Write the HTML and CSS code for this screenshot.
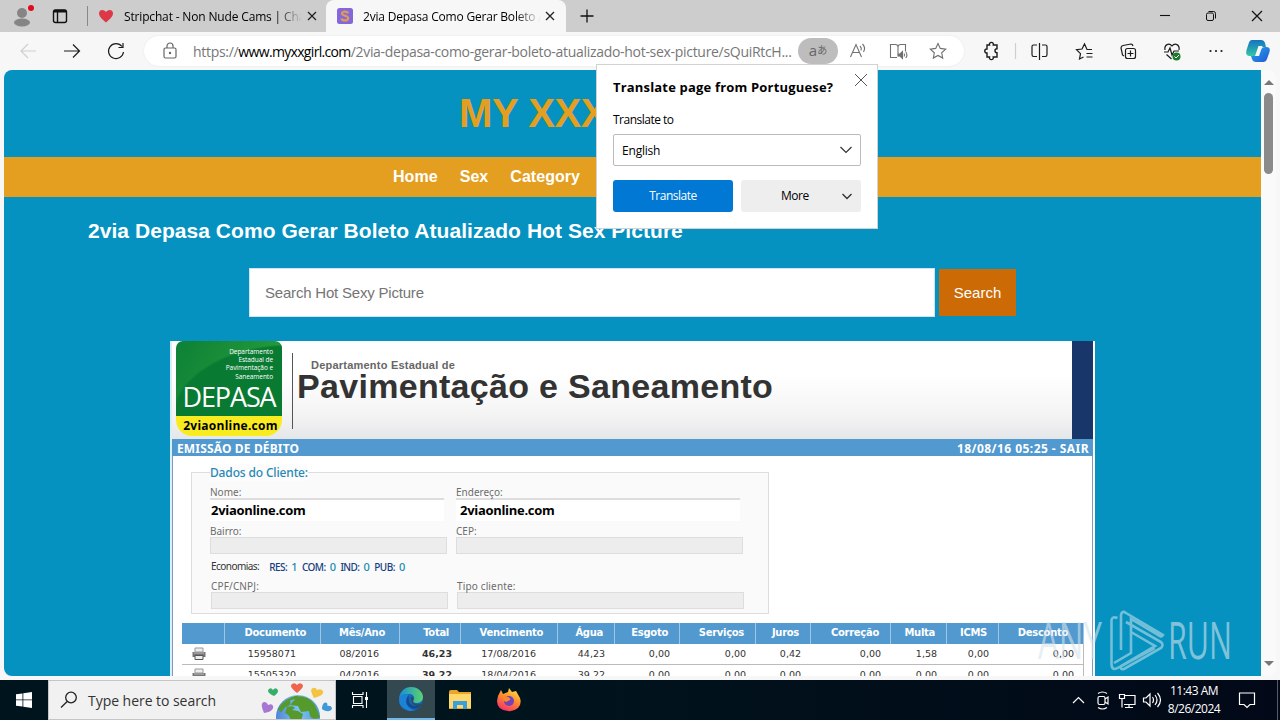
FILE: index.html
```html
<!DOCTYPE html>
<html lang="en">
<head>
<meta charset="utf-8">
<title>2via Depasa Como Gerar Boleto</title>
<link rel="stylesheet" href="styles.css">
</head>
<body>
<div class="screen">
  <header class="tabstrip">
    <svg class="profile" width="80" height="32" viewBox="0 0 80 32"><circle cx="22" cy="13" r="5" fill="#858585"/><ellipse cx="22" cy="22.5" rx="8" ry="4" fill="#858585"/><circle cx="31" cy="8" r="3" fill="#e00b1c"/><g fill="none" stroke="#111" stroke-width="1.4"><rect x="53.5" y="10" width="13" height="12.5" rx="2"/><path d="M54 11.2h12" stroke-width="2.6"/><path d="M57.5 12v10"/></g></svg>
    <i class="tabsep"></i>
    <div class="tab">
      <svg width="16" height="16" viewBox="0 0 16 16"><path d="M8 14.5C4 11 1 8.500 1 5.200 1 1.500 5.800 .600 8 4c2.200-3.400 7-2.500 7 1.200 0 3.300-3 5.800-7 9.300z" fill="#dc3848"/></svg>
      <span class="tabtitle t1">Stripchat - Non Nude Cams | Chat</span>
      <svg class="x" width="10" height="10" viewBox="0 0 10 10"><path d="M1 1l8 8M9 1L1 9" stroke="#222" stroke-width="1.3"/></svg>
    </div>
    <div class="tab active">
      <svg width="16" height="16" viewBox="0 0 16 16"><rect width="16" height="16" rx="2.500" fill="#8467dd"/><path d="M11 5.300C10.300 3.300 5 2.900 5 5.600c0 2.600 6.100 1.600 6.100 4.600 0 3-6 2.800-6.600.2" fill="none" stroke="#dc9c54" stroke-width="2.300"/></svg>
      <span class="tabtitle t2">2via Depasa Como Gerar Boleto Atualizado</span>
      <svg class="x" width="10" height="10" viewBox="0 0 10 10"><path d="M1 1l8 8M9 1L1 9" stroke="#222" stroke-width="1.3"/></svg>
    </div>
    <svg class="plus" width="16" height="16" viewBox="0 0 16 16"><path d="M8 1.500v13M1.500 8h13" stroke="#111" stroke-width="1.300"/></svg>
    <svg class="winctl" width="104" height="14" viewBox="0 0 104 14" fill="none" stroke="#111"><path d="M0 6.500h10" stroke-width="1.100"/><rect x="46.500" y="4" width="7" height="7.500" rx="1.500"/><path d="M48.500 2.500h5a2 2 0 0 1 2 2v5"/><path d="M92 2l10 10M102 2L92 12" stroke-width="1.200"/></svg>
  </header>

  <div class="toolbar">
    <svg class="navicons" width="124" height="20" viewBox="0 0 124 20" fill="none" stroke="#1c1c1c" stroke-width="1.200"><path d="M16 10H1M8 3l-7 7 7 7" stroke="#cfcfcf"/><path d="M44 10h15.500M53 3.500l6.500 6.500-6.500 6.500"/><path d="M102 5.500A7.500 7.500 0 1 0 103.500 11M103 2v4.500h-4.500"/></svg>
    <div class="omnibox">
      <svg width="14" height="18" viewBox="0 0 14 18" fill="none" stroke="#666" stroke-width="1.200"><rect x="1" y="6" width="12" height="10" rx="1.500"/><path d="M4 6V4a3 3 0 0 1 6 0v2"/><circle cx="7" cy="11" r=".6" fill="#666"/></svg>
      <span class="url"><span>https://</span><b>www.myxxgirl.com</b><span class="path">/2via-depasa-como-gerar-boleto-atualizado-hot-sex-picture/sQuiRtcH...</span></span>
      <span class="pill">a<small>あ</small></span>
      <svg class="omniicons" width="104" height="22" viewBox="0 0 104 22" fill="none" stroke="#707070" stroke-width="1.100"><path d="M3.500 17L9 4.500 14.500 17M5.500 12.500h7M13 6q2 2 1 4.500M15.500 4q3.500 3.500 1 8"/><path d="M50 17.500h-6.500v-13h5q2 0 2.500 2v10M51 6.500q.5-2 2.500-2h5v7"/><path d="M51.500 14h1.500l2.500-2.500v7L53 16h-1.500z" fill="#707070"/><path d="M57 13.500q1.200 1.500 0 3M58.800 12q2.200 3 0 6"/><path d="M91 3.500l2.300 4.900 5.400.7-4 3.700 1 5.300-4.700-2.600-4.700 2.600 1-5.300-4-3.700 5.400-.7z"/></svg>
    </div>
    <svg class="toolicons" width="300" height="30" viewBox="975 36 300 30" fill="none" stroke="#1c1c1c" stroke-width="1.200">
      <path d="M987 45h2.500a2 2 0 1 1 3.800 0H997v3.800a2 2 0 1 0 0 4V57h-3.700a2 2 0 1 1-3.800 0H987v-4h-.5a2 2 0 1 1 .5-4z" stroke-width="1.400"/>
      <path d="M1015.500 43v16" stroke="#cfcfcf"/>
      <path d="M1039.500 43v17M1037 45h-3.500q-1.500 0-1.500 1.500v8q0 2 1.500 2h3.500M1042 45h3.500q1.500 0 1.500 1.500v8q0 2-1.500 2H1042"/>
      <path d="M1092 49.500h-5l-2.500-5.500-2.500 5-5.500.7 4 4-1 5.300 4-2M1086.500 53.500h6M1086.500 57h6"/>
      <path d="M1124 56l-1.500-1-1.500-7q0-2 2-2.500l8-1.500q1.500 0 2 2"/><rect x="1125.500" y="48.500" width="10" height="10" rx="2"/><path d="M1130.500 50.500v6M1127.500 53.500h6"/>
      <path d="M1165 50c-1-5 4-8 7-4 3-4 8-1 7 4M1164 52h4l2-4 2 7 2-4h5M1166.500 54.500l5 4.500"/><circle cx="1176.500" cy="56.500" r="4" fill="#1c7c2e" stroke="none"/><path d="M1174.500 56.500l1.500 1.500 3-3" stroke="#fff" stroke-width="1"/>
      <g fill="#1c1c1c" stroke="none"><circle cx="1210.500" cy="51" r="1.100"/><circle cx="1216" cy="51" r="1.100"/><circle cx="1221.500" cy="51" r="1.100"/></g>
      <defs><linearGradient id="ca" x2="0" y2="1"><stop stop-color="#1572c4"/><stop offset="1" stop-color="#33c7a3"/></linearGradient><linearGradient id="cb" x2="1" y2="1"><stop stop-color="#29a6ee"/><stop offset="1" stop-color="#2356d4"/></linearGradient></defs>
      <path d="M1252 40h9q3 0 4 3l1 4h-4q-3 0-4 3l-2 6h-6q-5 0-3.500-6l2-6q1-4 3.500-4z" fill="url(#ca)" stroke="none"/><path d="M1265 47h1q5 0 3.500 5l-2.500 7q-1 3-4 3h-7q-3 0-4-3l-1-3h4q3 0 4-3l2-4q1-2 4-2z" fill="url(#cb)" stroke="none"/><path d="M1258.500 46h4l-3.500 10h-4z" fill="#f7f7f7" stroke="none"/>
    </svg>
  </div>

  <div class="viewport">
    <main class="site">
      <div class="brand">MY XXX</div>
      <nav><span>Home</span><span>Sex</span><span>Category</span></nav>
      <h1>2via Depasa Como Gerar Boleto Atualizado Hot Sex Picture</h1>
      <div class="search"><div class="field">Search Hot Sexy Picture</div><div class="go">Search</div></div>

      <section class="bill">
        <div class="billhead">
          <div class="logo"><div class="green"><p>Departamento<br>Estadual de<br>Pavimentação e<br>Saneamento</p><strong>DEPASA</strong></div><div class="yellow">2viaonline.com</div></div>
          <div class="dept"><span>Departamento Estadual de</span><b>Pavimentação e Saneamento</b></div>
          <i class="navy"></i>
        </div>
        <div class="strip"><span class="emissao">EMISSÃO DE DÉBITO</span><span class="sair">18/08/16 05:25 - SAIR</span></div>
        <div class="sheet">
          <div class="client">
            <div class="legend"><span>Dados do Cliente:</span></div>
            <div class="pair"><div><label>Nome:</label><div class="white">2viaonline.com</div></div><div><label>Endereço:</label><div class="white second">2viaonline.com</div></div></div>
            <div class="pair mid"><div><label>Bairro:</label><div class="grey"></div></div><div><label>CEP:</label><div class="grey"></div></div></div>
            <div class="econ"><span>Economias:</span><b>RES: <i>1</i></b><b>COM: <i>0</i></b><b>IND: <i>0</i></b><b>PUB: <i>0</i></b></div>
            <div class="pair low"><div><label>CPF/CNPJ:</label><div class="grey"></div></div><div><label>Tipo cliente:</label><div class="grey"></div></div></div>
          </div>
          <div class="table">
            <div class="row head"><span></span><span>Documento</span><span>Mês/Ano</span><span>Total</span><span>Vencimento</span><span>Água</span><span>Esgoto</span><span>Serviços</span><span>Juros</span><span>Correção</span><span>Multa</span><span>ICMS</span><span>Desconto</span></div>
            <div class="row"><span class="pr"><svg width="14" height="14" viewBox="0 0 14 14"><path d="M3 1h8v4H3z" fill="#eee" stroke="#999"/><path d="M.5 5h13v5H.5z" fill="#777"/><path d="M2 6h10M3 11h8" stroke="#bbb"/><path d="M3 8.500h8v4H3z" fill="#eee" stroke="#555"/></svg></span><span>15958071</span><span>08/2016</span><span class="tot">46,23</span><span>17/08/2016</span><span>44,23</span><span>0,00</span><span>0,00</span><span>0,42</span><span>0,00</span><span>1,58</span><span>0,00</span><span>0,00</span></div>
            <div class="row"><span class="pr"><svg width="14" height="14" viewBox="0 0 14 14"><path d="M3 1h8v4H3z" fill="#eee" stroke="#999"/><path d="M.5 5h13v5H.5z" fill="#777"/><path d="M2 6h10M3 11h8" stroke="#bbb"/><path d="M3 8.500h8v4H3z" fill="#eee" stroke="#555"/></svg></span><span>15505320</span><span>04/2016</span><span class="tot">39,22</span><span>18/04/2016</span><span>39,22</span><span>0,00</span><span>0,00</span><span>0,00</span><span>0,00</span><span>0,00</span><span>0,00</span><span>0,00</span></div>
          </div>
        </div>
      </section>
    </main>
    <aside class="scroll"><i class="up"></i><i class="thumb"></i><i class="down"></i></aside>
  </div>

  <footer class="taskbar">
    <div class="start"><svg width="16" height="16" viewBox="0 0 16 16" fill="#fff"><path d="M0 2.300l6.500-.9v6.100H0zM7.300 1.300L16 0v7.500H7.300zM0 8.300h6.500v6.200L0 13.700zM7.300 8.300H16V16l-8.700-1.300z"/></svg></div>
    <div class="tsearch">
      <svg width="18" height="18" viewBox="0 0 18 18" fill="none" stroke="#222" stroke-width="1.300"><circle cx="11" cy="6.500" r="5.300"/><path d="M7.200 10.500L1 16.500"/></svg>
      <span>Type here to search</span>
      <svg class="earth" width="72" height="38" viewBox="260 681 72 38"><defs><linearGradient id="sea"><stop stop-color="#4e86dc"/><stop offset=".5" stop-color="#7cc4f0"/><stop offset="1" stop-color="#4e9be0"/></linearGradient></defs><circle cx="297" cy="717" r="22" fill="url(#sea)"/><path d="M277 709q6-11 20-13.500-2 4-8 5 2 5-5 7l-4 5zM293 696q15-1 21 9l5 12q-7 4-10-1l-1-5-8 1-3-6-8-1 5-6zM286 707q6-2 8 1l-3 2 6 1 5 3-2 7h-10q-1-6-6-8z" fill="#569a2d"/><path d="M296 693c-6-5-7-7-5-9q3-2 5 1 2-3 5-1c2 2 1 4-5 9z" fill="#ee654d"/><path d="M273 696c-6-3-7-5-5-7q2-2 4 1 2-3 4-1c2 2 1 4-3 7z" fill="#35ae6c"/><path d="M313 698c-3-6-4-9-1-10q3-1 4 2 4-2 6 1c1 3-2 5-9 7z" fill="#f4c341"/><path d="M263 713c-3-7-3-10 0-11q3 0 4 3 4-2 5 1c1 3-2 6-9 7z" fill="#a678d4"/><path d="M321 709c0-4 2-8 5-6q1 3 0 3 4-1 5 2c0 3-5 5-10 1z" fill="#3d9ad6"/></svg>
    </div>
    <div class="apps">
      <div class="app"><svg width="18" height="18" viewBox="0 0 18 18" fill="none" stroke="#fff" stroke-width="1.100"><path d="M1.500 1v2.500H12V1M1.500 17v-2.500H12V17M2.500 5.500H11v7H2.500zM15.500 1v16"/><path d="M14 6h3v3h-3z" fill="#fff" stroke="none"/></svg></div>
      <div class="app current"><svg width="24" height="24" viewBox="0 0 24 24"><defs><linearGradient id="ed" x2="1"><stop stop-color="#198ed4"/><stop offset="1" stop-color="#5ad36f"/></linearGradient></defs><circle cx="12" cy="12" r="12" fill="#1564b8"/><path d="M0 12C1 4 6 0 12 0c7 0 12 5 12 10 0 4-3 6-7 6-4-.5-3-2-2-4 1-3-2-5-5-5-5 0-9 2-10 5z" fill="url(#ed)"/><path d="M0 13q0-6 7-6 3 0 4 2-5 3-2 9 2 5 7 5-3 1-6 1Q0 21 0 13z" fill="#1b83d5"/><path d="M10 8c-4 3-4 11 2 13 4 2 8 0 10-3-7 3-14 0-12-10z" fill="#114a91"/><path d="M12 10q3 0 2.500 3-1.500 2 1 3.500 4 2 9-.5-2 3-6 3-7-1-6.500-9z" fill="#34484f"/></svg></div>
      <div class="app"><svg width="22" height="20" viewBox="0 0 22 20"><path d="M0 2q0-2 2-2h6l2 2h12v17H0z" fill="#e9a52c"/><path d="M0 4h22v14H0z" fill="#ffd76a"/><path d="M4 11h14v8h-4v-4H8v4H4z" fill="#3aa0dc"/></svg></div>
      <div class="app"><svg width="24" height="24" viewBox="0 0 24 24"><defs><linearGradient id="ff" x1=".8" x2=".3" y2="1"><stop stop-color="#ffe63e"/><stop offset=".5" stop-color="#ff8730"/><stop offset="1" stop-color="#f5306b"/></linearGradient></defs><path d="M1 8l3-6 2 4 5-2 1-4 3 4 4-1 4 7q2 6-2 10-5 4-10 3Q0 22 0 13z" fill="url(#ff)"/><circle cx="12" cy="13" r="5" fill="#7142bc"/><path d="M5 8l6 1q3 1 2 3l-4 2q-3-1-4-6z" fill="#ff8a25"/></svg></div>
    </div>
    <svg class="tray" width="90" height="24" viewBox="0 0 90 24" fill="none" stroke="#fff" stroke-width="1.200"><path d="M1 15l5.500-5.500L12 15"/><rect x="26" y="8.500" width="7" height="8" rx="1.500"/><path d="M33 11l3-2v7l-3-2M26 5.500q4.500-3 9 0M26 19.500q4.500 3 9 0"/><path d="M52 7.500h11v9h-11M57 16.500v3M53 19.500h8M47.500 6.500h5v4h-5zM50 10.500v9"/><path d="M71.500 10v4h2.500l4 4V6l-4 4zM80.500 9q2 3 0 6M83 7q4 5 0 10M85.500 5q6 7 0 14"/></svg>
    <div class="clock"><span>11:43 AM</span><span>8/26/2024</span></div>
    <svg class="notice" width="18" height="18" viewBox="0 0 18 18" fill="none" stroke="#fff" stroke-width="1.200"><path d="M1.500 2h15v11.500H12L9 16.500l-3-3H1.500z"/></svg>
    <i class="desk"></i>
  </footer>

  <div class="popup">
    <div class="ptop"><b>Translate page from Portuguese?</b><svg width="14" height="14" viewBox="0 0 14 14"><path d="M1 1l12 12M13 1L1 13" stroke="#555"/></svg></div>
    <div class="to">Translate to</div>
    <div class="select"><span>English</span><svg width="12" height="8" viewBox="0 0 12 8"><path d="M.5 1L6 6.500 11.500 1" fill="none" stroke="#333" stroke-width="1.200"/></svg></div>
    <div class="buttons"><div class="blue">Translate</div><div class="more"><span>More</span><svg width="10" height="7" viewBox="0 0 10 7"><path d="M.5 1L5 5.500 9.500 1" fill="none" stroke="#333" stroke-width="1.400"/></svg></div></div>
  </div>

  <svg class="watermark" width="200" height="70" viewBox="1034 606 200 70">
    <text x="1038" y="659" textLength="64" lengthAdjust="spacingAndGlyphs">ANY</text><text x="1168" y="659" textLength="64" lengthAdjust="spacingAndGlyphs">RUN</text>
    <path d="M1117.500 618q-5-2-6 2v44q0 8 8 3l35-19M1121 650v-35q1-5 5-2l37 22q-1 2-3 1l-29-17v27M1126 622l35 20q3 3 0 6l-37 21q-4 1-3-3l34-20-24-14M1131 625v28l-17 10"/>
  </svg>
</div>
</body>
</html>
```
FILE: styles.css
```css
* { box-sizing: border-box; }
body { margin: 0; background: #f7f7f7; font-family: "Open Sans", "Noto Sans CJK JP", sans-serif; }
svg { display: block; flex: none; }
.screen { position: relative; width: 1280px; height: 720px; overflow: hidden; display: flex; flex-direction: column; }

.tabstrip { height: 32px; background: #cdcdcd; display: flex; align-items: center; flex: none; }
.tabsep { width: 1px; height: 20px; background: #888; margin: 0 10px 0 7px; }
.tab { display: flex; align-items: center; height: 32px; width: 228px; font-size: 12px; white-space: nowrap; }
.tab .tabtitle { width: 178px; margin-left: 10px; overflow: hidden; letter-spacing: -.2px; -webkit-mask-image: linear-gradient(90deg, #000 152px, transparent 178px); }
.tab .t1 { letter-spacing: -.16px; }
.tab .x { margin-left: 5px; }
.tab.active { background: #f7f7f7; width: 240px; padding-left: 11px; border-radius: 8px 8px 0 0; }
.tab.active .x { margin-left: 4px; }
.plus { margin-left: 13px; }
.winctl { margin-left: auto; margin-right: 16px; }

.toolbar { height: 38px; display: flex; align-items: center; flex: none; }
.navicons { margin-left: 20px; }
.omnibox { height: 30px; width: 820px; background: #fff; border-radius: 15px; display: flex; align-items: center; padding-left: 19px; box-shadow: 0 0 2px #e4e4e4; }
.url { width: 600px; margin-left: 16px; font-size: 14px; color: #777; white-space: nowrap; display: flex; letter-spacing: -.3px; }
.url b { font-weight: 400; color: #000; letter-spacing: -.67px; }
.pill { width: 40px; height: 26px; border-radius: 13px; background: #bdbdbd; color: #666; display: flex; align-items: center; justify-content: center; font-size: 15px; line-height: 20px; padding-bottom: 3px; margin-left: 5px; }
.pill small { font-size: 10px; }
.omniicons { margin-left: 9px; }
.toolicons { margin-left: 11px; }

.viewport { height: 606px; margin: 0 4px; display: flex; border-radius: 8px; overflow: hidden; background: #fafafa; flex: none; }
.site { width: 1257px; background: #0592c1; font-family: "Liberation Sans", Arial, sans-serif; overflow: hidden; }
.brand { height: 87px; padding-left: 455px; line-height: 86px; font-size: 40px; font-weight: 700; color: #e59f20; white-space: nowrap; letter-spacing: -.4px; }
nav { height: 40px; background: #e59f20; display: flex; gap: 22px; padding-left: 389px; color: #fff; font-weight: 700; font-size: 16px; line-height: 39px; letter-spacing: .05px; }
h1 { margin: 0; padding-left: 84px; height: 71px; line-height: 68px; color: #fff; font-size: 21px; letter-spacing: .05px; white-space: nowrap; }
.search { display: flex; gap: 4px; align-items: center; padding-left: 245px; height: 49px; font-size: 15px; }
.field { width: 686px; height: 49px; border: 1px solid #cfe4ec; background: #fff; color: #757575; line-height: 47px; padding-left: 15px; letter-spacing: -.2px; }
.go { width: 77px; height: 47px; background: #cc6a05; color: #fff; line-height: 47px; text-align: center; font-size: 15px; }

.bill { margin: 24px 0 0 166px; width: 925px; height: 340px; background: #fff; border-left: 2px solid #d9eef7; border-right: 2px solid #fff; }
.billhead { height: 98px; display: flex; background: linear-gradient(#fff 35%, #f4f4f4 75%, #e5e6e8); }
.logo { width: 106px; margin-left: 4px; height: 95px; border-radius: 7px 7px 16px 16px; overflow: hidden; flex: none; }
.green { height: 75px; background: radial-gradient(ellipse 120px 75px at 115px 78px, #087a31 0 97%, transparent 100%), linear-gradient(120deg, #0d8136, #2ea23b); color: #fff; padding-top: 7px; }
.green p { margin: 0; text-align: right; padding-right: 9px; font: 6.500px/8.200px "Open Sans", sans-serif; letter-spacing: -.05px; }
.green strong { display: block; font: 400 27px/28px "Open Sans", sans-serif; text-align: center; letter-spacing: -1.100px; padding-top: 2px; }
.yellow { height: 20px; background: #f8ec20; color: #000; font: 700 12px/20px "Open Sans", sans-serif; text-align: center; letter-spacing: .25px; white-space: nowrap; padding-left: 3px; }
.dept { margin: 12px 0 0 10px; height: 76px; border-left: 1px solid #555; padding: 5px 0 0 4px; display: flex; flex-direction: column; white-space: nowrap; color: #333; }
.dept span { font-size: 11px; line-height: 15px; padding-left: 14px; font-weight: 700; color: #666; letter-spacing: .22px; }
.dept b { font-size: 34px; line-height: 27px; letter-spacing: .3px; }
.navy { width: 21px; margin-left: auto; background: #19366a; }
.strip { height: 17px; background: #5199cf; color: #fff; display: flex; justify-content: space-between; padding: 0 4px 0 5px; font: 700 12px/19px "Noto Sans", sans-serif; letter-spacing: .15px; }
.sair { letter-spacing: .45px; }
.sheet { border-left: 1px solid #7f9abc; border-right: 1px solid #7f9abc; padding: 16px 0 0 9px; height: 230px; }
.client { width: 578px; height: 142px; margin-left: 9px; border: 1px solid #ddd; background: #fafafa; padding-left: 18px; color: #6c6c6c; font: 10px/12px "Noto Sans", sans-serif; }
.legend { height: 13px; margin-top: -6px; color: #2788b5; font-size: 12px; line-height: 12px; font-weight: 500; letter-spacing: -.15px; }
.legend span { background: #fcfcfc; }
.pair { display: flex; gap: 9px; height: 39px; padding-top: 5px; }
.pair > div:first-child { width: 237px; }
.pair > div:last-child { width: 287px; }
.pair label { display: block; height: 13px; line-height: 14px; }
.white { height: 23px; margin-right: 3px; background: #fff; border-top: 2px solid #ddd; color: #000; font: 700 13px/20px "Open Sans", sans-serif; letter-spacing: -.3px; padding-left: 1px; }
.second { padding-left: 4px; line-height: 21px; }
.grey { height: 17px; background: #ededed; border: 1px solid #ddd; }
.econ { display: flex; height: 15px; margin-top: 1px; line-height: 15px; gap: 5px; color: #333; letter-spacing: -.55px; padding-left: 1px; }
.econ span { margin-right: 5px; }
.econ b { font-weight: 500; color: #124082; }
.econ i { font-style: normal; color: #188ab0; font-size: 11px; margin-left: 2px; }
.low { padding-top: 5px; margin-left: 1px; }
.low label { letter-spacing: .15px; }
.table { width: 902px; margin-top: 9px; }
.row { display: grid; grid-template-columns: 43px 96px 79px 61px 97px 57px 65px 76px 55px 80px 56px 52px 85px; height: 21px; border-bottom: 1px solid #bbb; border-right: 1px solid #bbb; font: 9.500px/19px "DejaVu Sans", Verdana, sans-serif; color: #333; text-align: right; }
.row span { padding-right: 10px; white-space: nowrap; }
.row span:nth-child(2) { padding-right: 25px; }
.row span:nth-child(3) { padding-right: 21px; }
.row span:nth-child(5) { padding-right: 22px; }
.row.head { background: #5199cf; color: #fff; font-weight: 700; font-size: 10px; border: 0; line-height: 20px; letter-spacing: -.3px; }
.row.head span { border-right: 1px solid #9fc6e5; padding-right: 11px; }
.row.head span:nth-child(2), .row.head span:nth-child(3), .row.head span:nth-child(5) { padding-right: 14px; }
.row.head span:last-child { padding-right: 15px; }
.row .tot { font-weight: 700; padding-right: 9px; }
.pr svg { margin: 3px 0 0 10px; }

.scroll { width: 15px; display: flex; flex-direction: column; align-items: center; }
.up { border: 5px solid transparent; border-top: 0; border-bottom: 5px solid #777; margin-top: 10px; }
.thumb { width: 9px; height: 81px; border-radius: 5px; background: #8a8a8a; margin-top: 8px; }
.down { border: 5px solid transparent; border-bottom: 0; border-top: 5px solid #777; margin-top: auto; margin-bottom: 10px; }

.taskbar { height: 40px; margin-top: 4px; background: linear-gradient(90deg, #00141d 40%, #020817); color: #fff; display: flex; align-items: center; flex: none; }
.start { width: 48px; display: flex; justify-content: center; }
.tsearch { width: 288px; height: 40px; background: #f1f1f1; border: 1px solid #c5c5c5; color: #333; display: flex; align-items: center; padding-left: 11px; font-size: 14px; }
.tsearch span { margin-left: 10px; width: 173px; white-space: nowrap; letter-spacing: -.04px; }
.earth { align-self: flex-end; }
.apps { display: flex; gap: 1px; }
.app { width: 48px; height: 40px; display: flex; align-items: center; justify-content: center; }
.current { background: #34484f; border-bottom: 2px solid #75b8e8; }
.apps .current { margin-left: 2px; }
.tray { margin-left: auto; }
.clock { width: 52px; margin-left: 6px; display: flex; flex-direction: column; align-items: center; font-size: 12px; line-height: 18px; letter-spacing: -.5px; white-space: nowrap; margin-right: 18px; }
.notice { margin-right: 21px; }
.desk { width: 1px; height: 40px; background: #555d68; margin-right: 2px; }

.popup { position: absolute; left: 596px; top: 64px; width: 282px; height: 165px; background: #fff; border: 1px solid #d2d2d2; padding: 8px 16px; font-size: 12px; }
.ptop { display: flex; justify-content: space-between; height: 30px; font-size: 13px; line-height: 28px; white-space: nowrap; letter-spacing: .18px; margin-right: -7px; }
.to { height: 31px; line-height: 33px; letter-spacing: -.5px; }
.select { height: 32px; border: 1px solid #bbb; border-radius: 2px; display: flex; align-items: center; justify-content: space-between; padding: 0 8px; letter-spacing: -.2px; }
.buttons { display: flex; gap: 8px; margin-top: 14px; line-height: 32px; letter-spacing: -.5px; }
.blue { width: 120px; height: 32px; background: #0078d4; color: #fff; text-align: center; border-radius: 3px; }
.more { width: 120px; height: 32px; background: #eee; border-radius: 3px; display: flex; align-items: center; justify-content: space-between; padding: 0 9px 0 40px; }

.watermark { position: absolute; left: 1034px; top: 606px; fill: none; stroke: rgba(225, 235, 240, .5); stroke-width: 2.600; }
.watermark text { font: 400 51px "Open Sans", sans-serif; fill: rgba(215, 228, 235, .6); stroke: none; }
```
